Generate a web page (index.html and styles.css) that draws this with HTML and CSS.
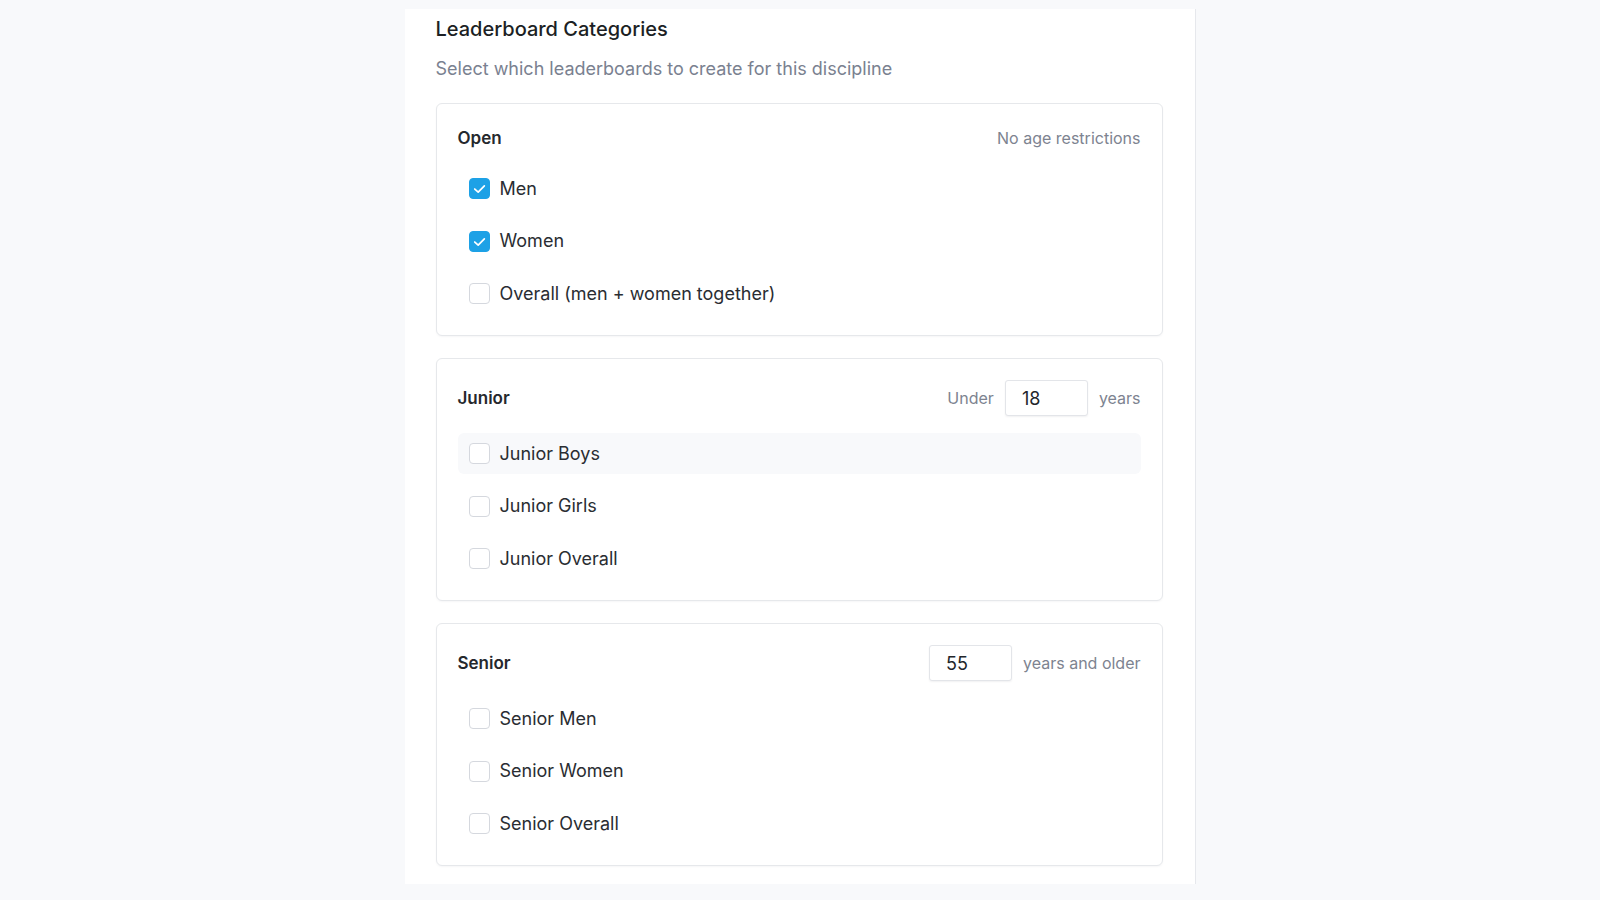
FILE: index.html
```html
<!DOCTYPE html>
<html lang="en">
<head>
<meta charset="utf-8">
<title>Leaderboard Categories</title>
<link rel="stylesheet" href="styles.css">
</head>
<body>
<main class="panel">
  <h2 class="title">Leaderboard Categories</h2>
  <p class="subtitle">Select which leaderboards to create for this discipline</p>

  <section class="card">
    <div class="card-head">
      <h3 class="card-title">Open</h3>
      <span class="hint">No age restrictions</span>
    </div>
    <ul class="options">
      <li class="option">
        <span class="box checked"><svg viewBox="0 0 16 16" width="21" height="21"><path d="M4.4 8.4 L7 10.8 L11.7 6" fill="none" stroke="#fff" stroke-width="1.3" stroke-linecap="round" stroke-linejoin="round"/></svg></span>
        <span class="label">Men</span>
      </li>
      <li class="option">
        <span class="box checked"><svg viewBox="0 0 16 16" width="21" height="21"><path d="M4.4 8.4 L7 10.8 L11.7 6" fill="none" stroke="#fff" stroke-width="1.3" stroke-linecap="round" stroke-linejoin="round"/></svg></span>
        <span class="label">Women</span>
      </li>
      <li class="option">
        <span class="box"></span>
        <span class="label">Overall (men + women together)</span>
      </li>
    </ul>
  </section>

  <section class="card">
    <div class="card-head">
      <h3 class="card-title">Junior</h3>
      <div class="age">
        <span class="hint">Under</span>
        <input class="age-input" type="text" value="18">
        <span class="hint">years</span>
      </div>
    </div>
    <ul class="options">
      <li class="option hover">
        <span class="box"></span>
        <span class="label">Junior Boys</span>
      </li>
      <li class="option">
        <span class="box"></span>
        <span class="label">Junior Girls</span>
      </li>
      <li class="option">
        <span class="box"></span>
        <span class="label">Junior Overall</span>
      </li>
    </ul>
  </section>

  <section class="card">
    <div class="card-head">
      <h3 class="card-title">Senior</h3>
      <div class="age">
        <input class="age-input" type="text" value="55">
        <span class="hint">years and older</span>
      </div>
    </div>
    <ul class="options">
      <li class="option">
        <span class="box"></span>
        <span class="label">Senior Men</span>
      </li>
      <li class="option">
        <span class="box"></span>
        <span class="label">Senior Women</span>
      </li>
      <li class="option">
        <span class="box"></span>
        <span class="label">Senior Overall</span>
      </li>
    </ul>
  </section>
</main>
</body>
</html>
```
FILE: styles.css
```css
* { box-sizing: border-box; }

html, body {
  margin: 0;
  padding: 0;
  background: #f8f9fb;
  font-family: Inter, "Noto Sans", "Liberation Sans", sans-serif;
  color: #1f2329;
}

body {
  height: 900px;
  overflow: hidden;
}

.panel {
  width: 791px;
  margin: 9px auto 0;
  background: #ffffff;
  border-right: 1px solid #e6e8ec;
  padding: 6px 32px 18px 31px;
}

.title {
  margin: 0;
  font-size: 20px;
  line-height: 28px;
  font-weight: 500;
  color: #1c1f24;
}

.subtitle {
  margin: 12px 0 20px;
  font-size: 18px;
  line-height: 28px;
  font-weight: 400;
  color: #7a8190;
}

.card {
  border: 1px solid #e6e8eb;
  border-radius: 6px;
  padding: 21px;
  background: #fff;
  box-shadow: 0 1px 2px rgba(16, 24, 40, 0.04);
}

.card + .card {
  margin-top: 22px;
}

.card-head {
  display: flex;
  align-items: center;
  justify-content: space-between;
  min-height: 26px;
  margin-bottom: 17px;
}

.card-title {
  margin: 0;
  font-size: 17px;
  line-height: 26px;
  font-weight: 600;
  color: #25282d;
}

.hint {
  font-size: 16px;
  line-height: 24px;
  color: #7d8390;
}

.age {
  display: flex;
  align-items: center;
  gap: 11px;
}

.age-input {
  width: 83px;
  height: 36px;
  border: 1px solid #e3e5e9;
  border-radius: 3px;
  box-shadow: 0 1px 2px rgba(16, 24, 40, 0.06);
  padding: 0 0 0 16px;
  font-family: inherit;
  font-size: 18px;
  color: #23262b;
  background: #fff;
  outline: none;
}

.options {
  list-style: none;
  margin: 0;
  padding: 0;
  display: flex;
  flex-direction: column;
  gap: 11.5px;
}

.option {
  display: flex;
  align-items: center;
  gap: 10px;
  height: 41px;
  padding: 0 11px;
  border-radius: 6px;
}

.option.hover {
  background: #f8f9fb;
}

.box {
  width: 21px;
  height: 21px;
  flex: none;
  border: 1px solid #d5d8de;
  border-radius: 4px;
  background: #fff;
  display: flex;
}

.box.checked {
  background: #1da1e6;
  border-color: #1da1e6;
}

.box svg {
  margin: -1px;
}

.label {
  font-size: 18px;
  line-height: 24px;
  color: #2a2d32;
}
```
